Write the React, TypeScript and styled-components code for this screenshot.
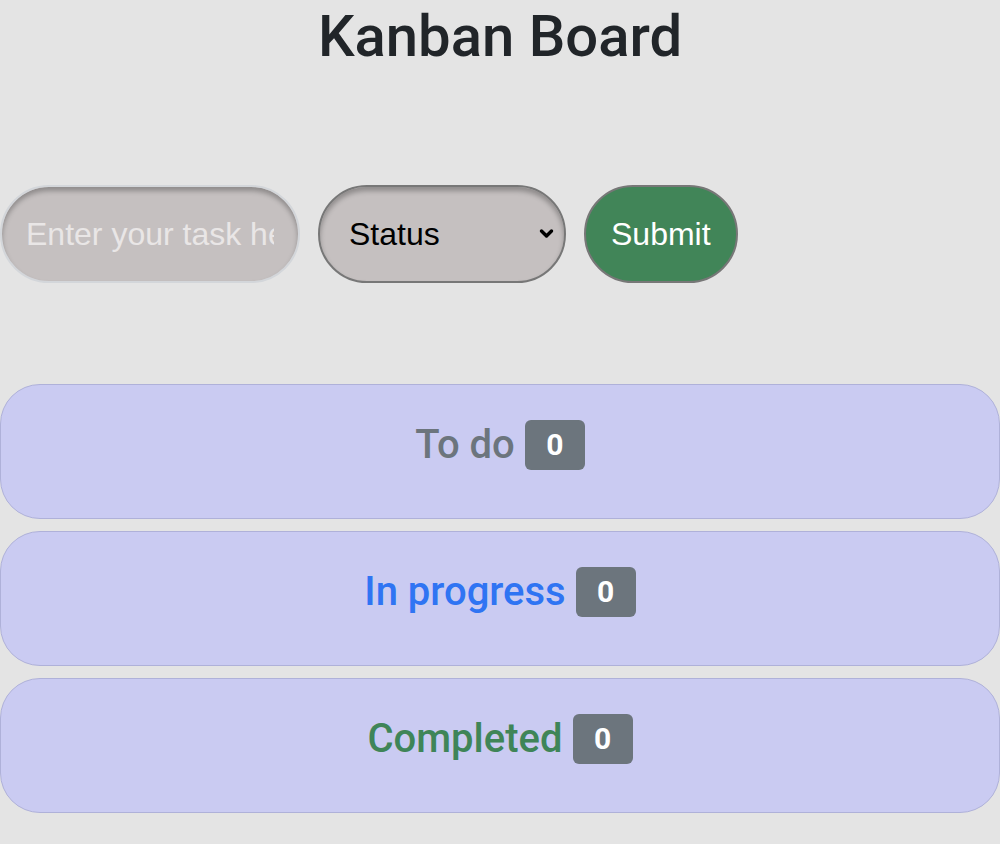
import React from 'react';
import styled, { createGlobalStyle } from 'styled-components';

const GlobalStyle = createGlobalStyle`
  body {
    margin: 0;
    background: #e4e4e4;
    font-family: Roboto, "Noto Sans", sans-serif;
    color: #212529;
  }
`;

const Page = styled.div`
  display: flex;
  flex-direction: column;
`;

const Title = styled.h1`
  margin: 0;
  text-align: center;
  font-size: 58px;
  font-weight: 500;
  line-height: 72px;
  color: #212529;
`;

const Form = styled.form`
  display: flex;
  align-items: center;
  gap: 18px;
  margin-top: 113px;
`;

const TaskInput = styled.input`
  box-sizing: border-box;
  width: 300px;
  height: 98px;
  padding: 0 24px;
  border: 2px solid #d3d6da;
  border-radius: 49px;
  background: #c5c0c0;
  box-shadow: inset 0 4px 5px rgba(0, 0, 0, 0.28);
  font-family: "Liberation Sans", Arial, sans-serif;
  font-size: 32px;
  color: #222;
  outline: none;

  &::placeholder {
    color: #e9e6e6;
  }
`;

const SelectWrap = styled.div`
  position: relative;
  display: flex;
`;

const StatusSelect = styled.select`
  box-sizing: border-box;
  width: 248px;
  height: 98px;
  padding: 0 50px 0 29px;
  border: 2px solid #777;
  border-radius: 49px;
  background: #c5c0c0;
  box-shadow: inset 0 4px 5px rgba(0, 0, 0, 0.28);
  font-family: "Liberation Sans", Arial, sans-serif;
  font-size: 32px;
  color: #000;
  appearance: none;
  outline: none;
`;

const Chevron = styled.svg`
  position: absolute;
  right: 12px;
  top: 50%;
  width: 15px;
  height: 11px;
  transform: translateY(-50%);
  pointer-events: none;
`;

const SubmitButton = styled.button`
  box-sizing: border-box;
  height: 98px;
  padding: 0 25px;
  border: 2px solid #777;
  border-radius: 49px;
  background: #418558;
  color: #fff;
  font-family: "Liberation Sans", Arial, sans-serif;
  font-size: 32px;
`;

const Columns = styled.div`
  display: flex;
  flex-direction: column;
  gap: 12px;
  margin-top: 101px;
`;

const Column = styled.section`
  box-sizing: border-box;
  height: 135px;
  padding-top: 35px;
  border: 1.5px solid #afb1d9;
  border-radius: 40px;
  background: #cacbf2;
`;

const ColumnTitle = styled.h3<{ $color: string }>`
  display: flex;
  justify-content: center;
  align-items: center;
  gap: 10px;
  margin: 0;
  font-size: 40px;
  font-weight: 500;
  line-height: 50px;
  color: ${(p) => p.$color};
`;

const Badge = styled.span`
  display: inline-flex;
  justify-content: center;
  align-items: center;
  width: 60px;
  height: 50px;
  border-radius: 6px;
  background: #6c757d;
  color: #fff;
  font-size: 30px;
  font-weight: 700;
`;

const columns = [
  { name: 'To do', color: '#6c757d' },
  { name: 'In progress', color: '#2f74f3' },
  { name: 'Completed', color: '#3f8558' },
];

const App = () => {
  return (
    <>
      <GlobalStyle />
      <Page>
        <Title>Kanban Board</Title>
        <Form onSubmit={(e) => e.preventDefault()}>
          <TaskInput type="text" placeholder="Enter your task here" />
          <SelectWrap>
            <StatusSelect defaultValue="">
              <option value="">Status</option>
              <option value="todo">To do</option>
              <option value="progress">In progress</option>
              <option value="done">Completed</option>
            </StatusSelect>
            <Chevron viewBox="0 0 15 11">
              <path
                d="M2.5 2.5l5 5 5-5"
                fill="none"
                stroke="#000"
                strokeWidth="3.4"
                strokeLinecap="round"
                strokeLinejoin="round"
              />
            </Chevron>
          </SelectWrap>
          <SubmitButton type="submit">Submit</SubmitButton>
        </Form>
        <Columns>
          {columns.map((col) => (
            <Column key={col.name}>
              <ColumnTitle $color={col.color}>
                {col.name}
                <Badge>0</Badge>
              </ColumnTitle>
            </Column>
          ))}
        </Columns>
      </Page>
    </>
  );
};

export default App;
